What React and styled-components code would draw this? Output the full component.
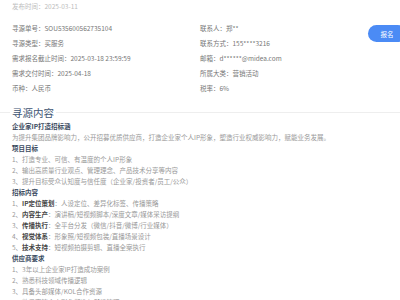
import React from "react";
import styled, { createGlobalStyle } from "styled-components";

const GlobalStyle = createGlobalStyle`
  html, body {
    margin: 0;
    padding: 0;
    background: #fff;
    overflow: hidden;
  }
  body {
    font-family: "Noto Sans CJK SC", "Noto Sans", sans-serif;
    -webkit-font-smoothing: antialiased;
  }
`;

const info = [
  ["寻源单号", "SOU535600562735104", "联系人", "郑**"],
  ["寻源类型", "买服务", "联系方式", "155****3216"],
  ["需求报名截止时间", "2025-03-18 23:59:59", "邮箱", "d******@midea.com"],
  ["需求交付时间", "2025-04-18", "所属大类", "营销活动"],
  ["币种", "人民币", "税率", "6%"],
];

const content = [
  { bold: "企业家IP打造招标涵", title: true },
  { text: "为提升集团品牌影响力，公开招募优质供应商，打造企业家个人IP形象，塑造行业权威影响力，赋能业务发展。" },
  { bold: "项目目标", title: true },
  { text: "1、打造专业、可信、有温度的个人IP形象" },
  { text: "2、输出高质量行业观点、管理理念、产品技术分享等内容" },
  { text: "3、提升目标受众认知度与信任度（企业家/投资者/员工/公众）" },
  { bold: "招标内容", title: true },
  { num: "1、", bold: "IP定位策划", text: "：人设定位、差异化标签、传播策略" },
  { num: "2、", bold: "内容生产", text: "：演讲稿/短视频脚本/深度文章/媒体采访提纲" },
  { num: "3、", bold: "传播执行", text: "：全平台分发（微信/抖音/微博/行业媒体）" },
  { num: "4、", bold: "视觉体系", text: "：形象照/短视频包装/直播场景设计" },
  { num: "5、", bold: "技术支持", text: "：短视频拍摄剪辑、直播全案执行" },
  { bold: "供应商要求", title: true },
  { text: "1、3年以上企业家IP打造成功案例" },
  { text: "2、熟悉科技领域传播逻辑" },
  { text: "3、具备头部媒体/KOL合作资源" },
  { text: "4、熟悉高管个人形象塑造与舆情管理" },
];

const Page = styled.div`
  width: 406px;
  padding-left: 12px;
  box-sizing: border-box;
  font-size: 6.5px;
`;

const Published = styled.div`
  line-height: 12px;
  color: #bdbdbd;
`;

const TopRow = styled.div`
  display: flex;
  align-items: flex-start;
  margin-top: 8.5px;
`;

const InfoGrid = styled.div`
  flex: 1;
  display: grid;
  grid-template-columns: 188px auto;
  grid-auto-rows: 15px;
  line-height: 15px;
  color: #777;
`;

const Cell = styled.div`
  white-space: nowrap;
`;

const Button = styled.button`
  margin-top: 4.5px;
  width: 38px;
  height: 17px;
  border: none;
  border-radius: 9px;
  background: #4b8bf5;
  color: #fff;
  font-family: inherit;
  font-size: 6.5px;
  padding: 0;
`;

const SectionHead = styled.div`
  display: flex;
  align-items: center;
  gap: 2px;
  margin: 10px 0 0 -12px;
  font-size: 10.5px;
  line-height: 13px;
  color: #415673;

  &::before {
    content: "";
    width: 10px;
    height: 1px;
    background: #eeeeee;
  }
  &::after {
    content: "";
    flex: 1;
    height: 1px;
    background: #eeeeee;
  }
`;

const Body = styled.div`
  margin-top: 2px;
  line-height: 11px;
  color: #999;
`;

const Line = styled.div`
  white-space: nowrap;
  font-weight: ${(p) => (p.$title ? 700 : 400)};
  color: ${(p) => (p.$title ? "#3a4a60" : "inherit")};
`;

const Strong = styled.b`
  font-weight: 700;
  color: #444;
`;

export default function App() {
  return (
    <>
      <GlobalStyle />
      <Page>
        <Published>发布时间：2025-03-11</Published>
        <TopRow>
          <InfoGrid>
            {info.map(([l1, v1, l2, v2]) => (
              <React.Fragment key={l1}>
                <Cell>{l1}：{v1}</Cell>
                <Cell>{l2}：{v2}</Cell>
              </React.Fragment>
            ))}
          </InfoGrid>
          <Button>报名</Button>
        </TopRow>
        <SectionHead>寻源内容</SectionHead>
        <Body>
          {content.map((c, i) =>
            c.title ? (
              <Line key={i} $title>{c.bold}</Line>
            ) : (
              <Line key={i}>
                {c.num}
                {c.num && <Strong>{c.bold}</Strong>}
                {c.text}
              </Line>
            )
          )}
        </Body>
      </Page>
    </>
  );
}
